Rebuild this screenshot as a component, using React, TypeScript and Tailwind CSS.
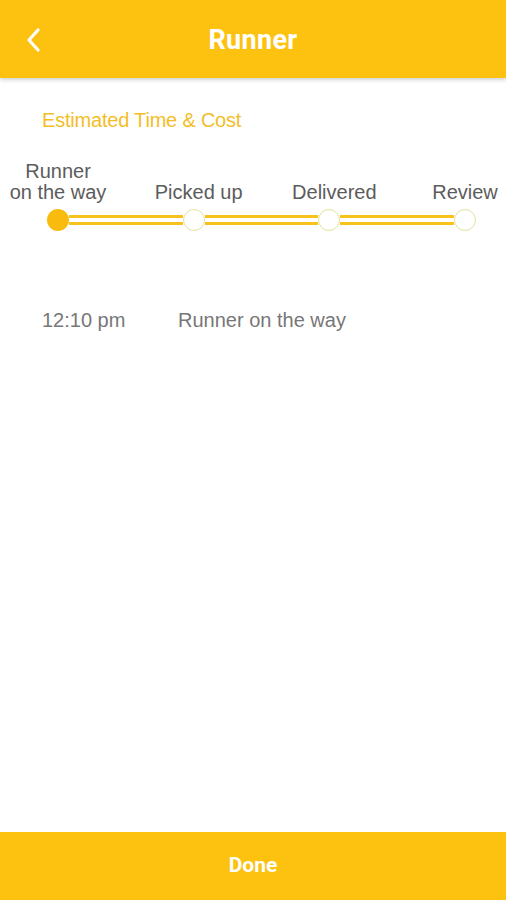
import React from 'react'

const steps = [
  { label: 'Runner\non the way', done: true, shift: '' },
  { label: 'Picked up', done: false, shift: 'translate-x-[5px]' },
  { label: 'Delivered', done: false, shift: 'translate-x-[5px]' },
  { label: 'Review', done: false, shift: '' },
]

function Step({ label, done, shift }: { label: string; done: boolean; shift: string }) {
  return (
    <div className='flex flex-col items-center w-[22px] shrink-0'>
      <span className={`whitespace-pre text-center text-[20px] leading-[21px] text-[#5c5c5c] mb-[6px] ${shift}`}>
        {label}
      </span>
      {done ? (
        <div className='w-[22px] h-[22px] rounded-full bg-[#f9bb0d]' />
      ) : (
        <div className='w-[22px] h-[22px] rounded-full bg-white border-[1.5px] border-[#e4e49c]' />
      )}
    </div>
  )
}

export default function App() {
  return (
    <div className='flex flex-col h-[900px] w-full bg-white font-["Liberation_Sans",Arial,sans-serif]'>
      <header className='relative flex items-center justify-center h-[78px] pt-[2px] bg-[#fdc110] shadow-[0_2px_4px_rgba(0,0,0,0.18)] z-10'>
        <button className='absolute left-[24px] top-[27px] text-white'>
          <svg width='20' height='26' viewBox='0 0 20 26' fill='none'>
            <path d='M14 3 L5 13 L14 23' stroke='white' strokeWidth='3.2' strokeLinecap='round' strokeLinejoin='round' />
          </svg>
        </button>
        <h1 className='text-white text-[27px] font-bold font-["Roboto",sans-serif] tracking-[0.3px]'>Runner</h1>
      </header>

      <main className='flex-1'>
        <p className='mt-[31px] ml-[42px] text-[20px] leading-[22px] text-[#f4bd28] tracking-[-0.2px]'>Estimated Time &amp; Cost</p>

        <div className='flex items-end ml-[47px] mr-[30px] mt-[30px]'>
          {steps.map((s, i) => (
            <React.Fragment key={i}>
              {i > 0 && (
                <div className='flex-1 h-[10px] mb-[6px] border-y-[3px] border-[#f7c21c] bg-white' />
              )}
              <Step label={s.label} done={s.done} shift={s.shift} />
            </React.Fragment>
          ))}
        </div>

        <div className='flex mt-[78px] ml-[42px] text-[20px] leading-[22px] text-[#777777]'>
          <span className='w-[136px]'>12:10 pm</span>
          <span>Runner on the way</span>
        </div>
      </main>

      <footer className='h-[68px] flex items-center justify-center bg-[#fdc110]'>
        <span className='text-white text-[21px] font-bold font-["Roboto",sans-serif]'>Done</span>
      </footer>
    </div>
  )
}
